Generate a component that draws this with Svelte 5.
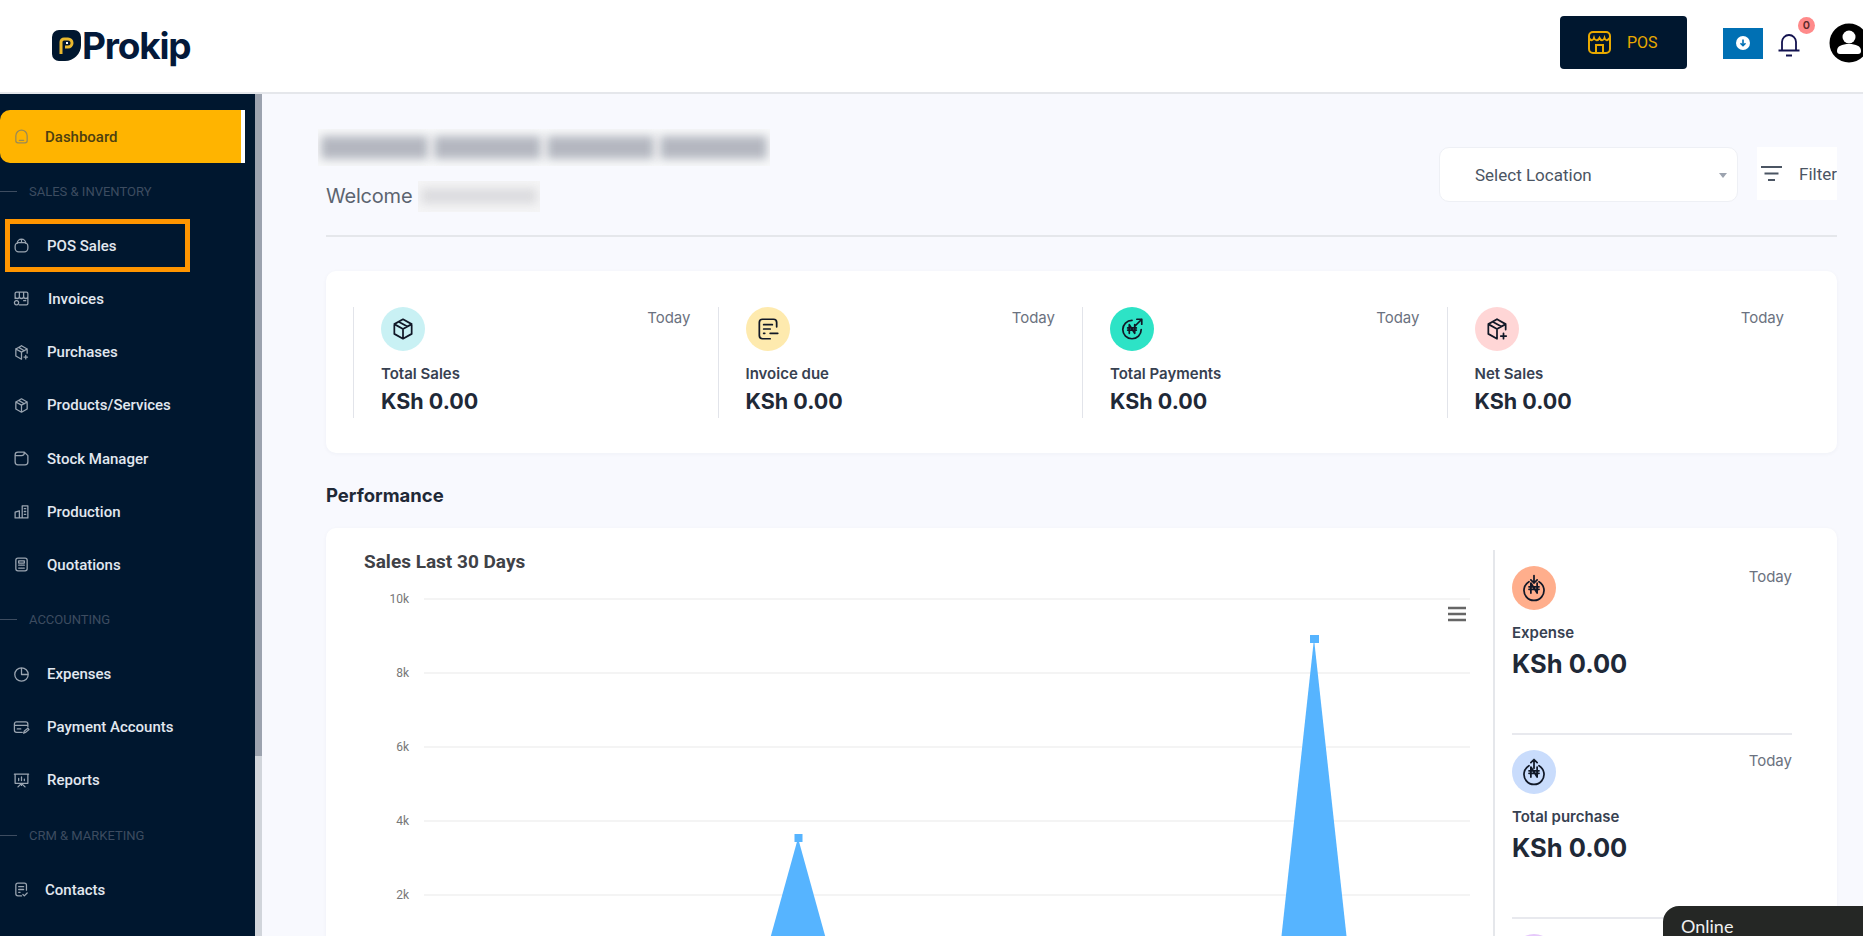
<script lang="ts">
  const nav = [
    { label: 'Dashboard', active: true, dx: -2, d: 'M4 11a8 8 0 0 1 16 0v7a3 3 0 0 1-3 3H7a3 3 0 0 1-3-3zM9 17.500h6' },
    { section: 'SALES & INVENTORY' },
    { label: 'POS Sales', dx: 0, d: 'M3 13a5 5 0 0 1 5-5h8a5 5 0 0 1 5 5v3a5 5 0 0 1-5 5H8a5 5 0 0 1-5-5zM6 9a6 6 0 0 1 12 0M12 3v4' },
    { label: 'Invoices', dx: 1, d: 'M5 3h14a2 2 0 0 1 2 2v14a2 2 0 0 1-2 2H9M3 12V5a2 2 0 0 1 2-2M3 9a3 3 0 0 0 6 0 3 3 0 0 0 6 0 3 3 0 0 0 6 0M9 3v6M15 3v6M15 15h3M5 15a3 3 0 1 0 .01 0' },
    { label: 'Purchases', dx: 0, d: 'M12 2.500l8 4.500v6M4 7l8-4.500M4 7v10l8 4.500M4 7l8 4.500 8-4.500M12 11.500v10M8 4.800l8 4.700M18 16v5M15.500 18.500h5' },
    { label: 'Products/Services', dx: 0, d: 'M12 2.500l8 4.500v10l-8 4.500-8-4.500V7zM4 7l8 4.500L20 7M12 11.500v10M8 4.800l8 4.700' },
    { label: 'Stock Manager', dx: 0, d: 'M3 7a4 4 0 0 1 4-4h9l5 5v9a4 4 0 0 1-4 4H7a4 4 0 0 1-4-4zM3 8h9a4 4 0 0 0 4-4V3' },
    { label: 'Production', dx: 0, d: 'M3 21V13l6-2v10M3 21h18V4l-8 0v17M16 8h2M16 12h2M16 16h2' },
    { label: 'Quotations', dx: 0, d: 'M7 3h10a3 3 0 0 1 3 3v12a3 3 0 0 1-3 3H7a3 3 0 0 1-3-3V6a3 3 0 0 1 3-3zM8 7h8v3H8zM8 13h2M11 13h2M14 13h2M8 17h2M11 17h2M14 17h2' },
    { section: 'ACCOUNTING' },
    { label: 'Expenses', dx: 0, d: 'M12 2.500a9.500 9.500 0 1 0 9.500 9.500A9.500 9.500 0 0 0 12 2.500zM12 3v9h9' },
    { label: 'Payment Accounts', dx: 0, d: 'M21 11V7a3 3 0 0 0-3-3H5a3 3 0 0 0-3 3v9a3 3 0 0 0 3 3h8M2 9h19M6 14h5M15 20l1-3 5-4 1.500 2-5 4z' },
    { label: 'Reports', dx: 0, d: 'M3 3h18v13H3zM7 21l5-5 5 5M12 16v3M8 12V9M12 12V7M16 12v-2M2 3h20' },
    { section: 'CRM & MARKETING' },
    { label: 'Contacts', dx: -2, d: 'M19 13V6a3 3 0 0 0-3-3H7a3 3 0 0 0-3 3v12a3 3 0 0 0 3 3h5M8 8h7M8 12h7M8 16h2M14 19l2 2 4-4' }
  ]

  const naira = 'M9.500 16V8l5 8V8M8 11h8M8 13h8'
  const stats = [
    { label: 'Total Sales', tint: '#c9f1f4', d: 'M12 3l8 4.500v9L12 21l-8-4.500v-9zM4 7.500L12 12l8-4.500M12 12v9M8 5.200l8 4.600' },
    { label: 'Invoice due', tint: '#feeaae', d: 'M20 10V6a3 3 0 0 0-3-3H7a3 3 0 0 0-3 3v12a3 3 0 0 0 3 3h7M8 8h8M8 12h6M8 16h1M14 16h7' },
    { label: 'Total Payments', tint: '#2de3c6', d: `M12 4a8.500 8.500 0 1 0 8.500 8.500M15 9l6-6M16.500 3H21v4.500${naira}` },
    { label: 'Net Sales', tint: '#ffd6d6', d: 'M12 3l8 4.500v5M4 7.500L12 3M4 7.500v9L12 21M4 7.500L12 12l8-4.500M12 12v9M8 5.200l8 4.600M18 16v5M15.500 18.500h5' }
  ]
  const sideStats = [
    { label: 'Total purchase', tint: '#c9dcfc', d: `M8 7a8 8 0 1 0 8 0M12 9V2M9.500 4.500L12 2l2.500 2.500${naira}` }
  ]
  const expenseIcon = `M8 7a8 8 0 1 0 8 0M12 8V2M9.500 5.500L12 8l2.500-2.500${naira}`
  const ticks = ['10k', '8k', '6k', '4k', '2k']
</script>

<div class="page">
  <header class="topbar">
    <div class="logo">
      <svg width="29" height="31" viewBox="0 0 29 31">
        <path d="M7 0h15a7 7 0 0 1 7 7v8a16 16 0 0 1-16 16H7a7 7 0 0 1-7-7V7a7 7 0 0 1 7-7z" fill="#00172f" />
        <path d="M9 24V12a3 3 0 0 1 3-3h4a4 4 0 0 1 0 8h-3" fill="none" stroke="#e9b92f" stroke-width="3" />
        <path d="M14 13h2" stroke="#fff" stroke-width="2" />
      </svg>
      <span>Prokip</span>
    </div>
    <div class="top-actions">
      <button class="pos-btn">
        <svg width="23" height="23" viewBox="0 0 23 23" fill="none" stroke="#e8a900" stroke-width="2">
          <rect x="1" y="1" width="21" height="21" rx="4" />
          <path d="M1 7c2 3 4 3 5 0 1 3 4 3 5.500 0 1.500 3 4 3 5 0 1 3 3 3 5 0M8 22v-8h7v8" />
        </svg>
        POS
      </button>
      <button class="install">
        <svg width="14" height="14" viewBox="0 0 14 14">
          <circle cx="7" cy="7" r="7" fill="#fff" />
          <path d="M7 3.500v6M4.500 7.200L7 9.700l2.500-2.500" fill="none" stroke="#0070b4" stroke-width="1.600" />
        </svg>
      </button>
      <div class="bell">
        <svg width="24" height="25" viewBox="0 0 24 25" fill="none" stroke="#12124f" stroke-width="1.800">
          <path d="M5 18V10a7 7 0 0 1 14 0v8M1.500 18.500h21M9 23.500h6" />
        </svg>
        <span class="badge">0</span>
      </div>
      <svg class="avatar" width="40" height="40" viewBox="0 0 40 40">
        <circle cx="20" cy="20" r="19.500" fill="#000" />
        <circle cx="20" cy="14" r="6.500" fill="#fff" />
        <path d="M8 28c0-5 5-7 12-7s12 2 12 7c0 2-1 3-3 3H11c-2 0-3-1-3-3z" fill="#fff" />
      </svg>
    </div>
  </header>

  <div class="body">
    <aside class="sidebar">
      <nav class="menu">
        {#each nav as item}
          {#if item.section}
            <div class="section"><i></i>{item.section}</div>
          {:else}
            <a class="item" class:active={item.active} class:marked={item.label === 'POS Sales'} href="#top">
              <svg width="17" height="17" viewBox="0 0 24 24" fill="none" stroke="currentColor" stroke-width="1.800" stroke-linecap="round" stroke-linejoin="round">
                <path d={item.d} />
              </svg>
              <span style="margin-left: {item.dx}px">{item.label}</span>
            </a>
          {/if}
        {/each}
      </nav>
      <div class="scroll"><div class="thumb"></div></div>
    </aside>

    <main class="content">
      <div class="head">
        <div>
          <div class="smudge title"><b></b><b></b><b></b><b></b></div>
          <div class="welcome">Welcome .<div class="smudge name"><b></b></div></div>
        </div>
        <div class="filters">
          <div class="select">Select Location<i></i></div>
          <button class="filter">
            <svg width="21" height="17" viewBox="0 0 21 17" stroke="#4b5563" stroke-width="2.200">
              <path d="M0 2h21M3.500 8.500h14M7 15h7" />
            </svg>
            Filter
          </button>
        </div>
      </div>

      <section class="card summary">
        {#each stats as s}
          <div class="stat">
            <div class="stat-top">
              <span class="dot" style="background: {s.tint}">
                <svg width="26" height="26" viewBox="0 0 24 24" fill="none" stroke="#111827" stroke-width="1.600" stroke-linecap="round" stroke-linejoin="round"><path d={s.d} /></svg>
              </span>
              <span class="when">Today</span>
            </div>
            <div class="stat-label">{s.label}</div>
            <div class="stat-value">KSh 0.00</div>
          </div>
        {/each}
      </section>

      <h2>Performance</h2>

      <section class="card perf">
        <div class="chart">
          <h3>Sales Last 30 Days</h3>
          <svg class="plot" width="1100" height="380" viewBox="0 0 1100 380">
            {#each ticks as t, i}
              <line x1="60" x2="1106" y1={10 + i * 74} y2={10 + i * 74} stroke="#f1f1f1" stroke-width="1.500" />
              <text x="45" y={14 + i * 74} text-anchor="end">{t}</text>
            {/each}
            <path d="M398 379L434 249L470 379z" fill="#56b4ff" />
            <rect x="430.500" y="245" width="8" height="8" fill="#56b4ff" />
            <path d="M914 379L950 50L986 379z" fill="#56b4ff" />
            <rect x="946" y="46" width="9" height="8" fill="#56b4ff" />
            <path d="M1084 19h18M1084 25h18M1084 31h18" stroke="#666" stroke-width="2.500" />
          </svg>
        </div>
        <div class="side">
          <div class="side-stat">
            <div class="stat-top">
              <span class="dot" style="background: #ffae8c">
                <svg width="30" height="30" viewBox="0 0 24 24" fill="none" stroke="#111827" stroke-width="1.400" stroke-linecap="round" stroke-linejoin="round"><path d={expenseIcon} /></svg>
              </span>
              <span class="when">Today</span>
            </div>
            <div class="stat-label">Expense</div>
            <div class="stat-value big">KSh 0.00</div>
          </div>
          {#each sideStats as s}
            <div class="side-stat">
              <div class="stat-top">
                <span class="dot" style="background: {s.tint}">
                  <svg width="30" height="30" viewBox="0 0 24 24" fill="none" stroke="#111827" stroke-width="1.400" stroke-linecap="round" stroke-linejoin="round"><path d={s.d} /></svg>
                </span>
                <span class="when">Today</span>
              </div>
              <div class="stat-label">{s.label}</div>
              <div class="stat-value big">KSh 0.00</div>
            </div>
          {/each}
          <div class="side-stat"><span class="dot" style="background: #e6c9fb"></span></div>
        </div>
      </section>
    </main>
  </div>

  <div class="online">Online</div>
</div>

<style>
  :global(body) {
    margin: 0;
    overflow: hidden;
  }

  .page {
    position: relative;
    width: 1863px;
    height: 936px;
    overflow: hidden;
    font-family: Inter, 'Liberation Sans', sans-serif;
    background: #f8f9fe;
  }

  button {
    border: none;
    padding: 0;
    font: inherit;
  }

  .topbar {
    height: 92px;
    box-sizing: content-box;
    background: #fff;
    border-bottom: 2px solid #e5e7eb;
    display: flex;
    align-items: center;
    justify-content: space-between;
  }

  .logo {
    display: flex;
    align-items: center;
    gap: 1px;
    margin-left: 52px;
    margin-top: -2px;
    font-size: 37px;
    font-weight: 700;
    letter-spacing: -1.200px;
    color: #03193a;
  }

  .top-actions {
    display: flex;
    align-items: center;
    margin-right: -6px;
  }

  .pos-btn {
    width: 127px;
    height: 53px;
    margin-top: -8px;
    background: #00172f;
    border-radius: 4px;
    color: #e8a900;
    font-family: Roboto, sans-serif;
    font-size: 16px;
    display: flex;
    align-items: center;
    gap: 16px;
    padding-left: 28px;
    box-sizing: border-box;
  }

  .install {
    width: 40px;
    height: 31px;
    margin: 0 0 6px 36px;
    background: #0070b4;
    display: flex;
    align-items: center;
    justify-content: center;
  }

  .bell {
    position: relative;
    margin: 0 28px 0 14px;
    height: 25px;
    top: -2px;
  }

  .badge {
    position: absolute;
    top: -15px;
    left: 21px;
    width: 17px;
    height: 17px;
    border-radius: 50%;
    background: #ff8a8a;
    color: #5b2b2b;
    font-size: 11px;
    font-weight: 600;
    text-align: center;
    line-height: 17px;
  }

  .avatar {
    margin-right: 0;
    flex: none;
    margin-top: -6px;
  }

  .body {
    display: flex;
    height: 842px;
  }

  .sidebar {
    flex: none;
    width: 262px;
    background: #00172f;
    display: flex;
    font-family: Roboto, sans-serif;
  }

  .menu {
    width: 255px;
    padding-top: 16px;
  }

  .scroll {
    width: 7px;
    background: #d1d5db;
  }

  .thumb {
    height: 662px;
    background: #9ca3af;
  }

  .item {
    display: flex;
    align-items: center;
    gap: 17px;
    height: 53.200px;
    padding-left: 13px;
    color: #e2e8f0;
    font-size: 15px;
    font-weight: 500;
    text-decoration: none;
    box-sizing: border-box;
  }

  .item svg {
    color: #9aa5b1;
  }

  .item.active {
    width: 245px;
    background: #ffb400;
    color: #4e3f10;
    border-right: 4px solid #fff;
    border-radius: 10px 0 0 10px;
    margin-bottom: 0;
  }

  .item.active svg {
    color: #9a8a55;
  }

  .item.marked {
    width: 185px;
    margin-left: 5px;
    padding-left: 8px;
    border: 5px solid #ff9500;
    outline: none;
    padding-left: 3px;
  }

  .section {
    display: flex;
    align-items: center;
    gap: 12px;
    height: 56px;
    color: #3d4c60;
    font-size: 13px;
  }

  .section i {
    width: 17px;
    height: 1px;
    background: #3d4c60;
  }

  .content {
    flex: 1;
    padding: 35px 26px 0 64px;
    min-width: 0;
  }

  .head {
    display: flex;
    justify-content: space-between;
    padding-bottom: 23px;
    border-bottom: 2px solid #e5e7eb;
  }

  .smudge {
    background: #f8f9fa;
    overflow: hidden;
    display: flex;
  }

  .smudge b {
    display: block;
    height: 60%;
    margin: auto 3px;
    flex: 1;
    background: #b4b7c0;
    filter: blur(5px);
  }

  .smudge.title {
    width: 452px;
    height: 37px;
    margin-left: -8px;
  }

  .welcome {
    display: flex;
    align-items: center;
    height: 32px;
    margin-top: 14px;
    font-size: 20px;
    color: #5c6470;
    white-space: nowrap;
    letter-spacing: -0.200px;
  }

  .smudge.name {
    width: 122px;
    height: 31px;
    margin-left: -5px;
    background: #f5f5f6;
  }

  .smudge.name b {
    background: #dcdcdf;
    height: 50%;
  }

  .filters {
    display: flex;
    gap: 19px;
    margin-top: 18px;
    height: 55px;
  }

  .select {
    position: relative;
    width: 299px;
    box-sizing: border-box;
    background: #fff;
    border: 1px solid #eef0f5;
    border-radius: 10px;
    padding-left: 35px;
    display: flex;
    align-items: center;
    font-family: Roboto, sans-serif;
    font-size: 17px;
    color: #4b5563;
  }

  .select i {
    position: absolute;
    right: 10px;
    top: 25px;
    border: 4px solid transparent;
    border-top: 5px solid #9ca3af;
    border-bottom: 0;
  }

  .filter {
    width: 80px;
    height: 53px;
    background: #fff;
    color: #4b5563;
    font-family: Roboto, sans-serif;
    font-size: 17px;
    display: flex;
    align-items: center;
    gap: 17px;
    padding-left: 4px;
    box-sizing: border-box;
    overflow: hidden;
  }

  .card {
    background: #fff;
    border-radius: 10px;
    box-shadow: 0 1px 4px rgba(30, 40, 80, 0.04);
  }

  .summary {
    margin-top: 34px;
    height: 182px;
    box-sizing: border-box;
    padding: 36px 0 0 27px;
    display: grid;
    grid-template-columns: repeat(4, 364.500px);
  }

  .stat {
    height: 111px;
    border-left: 1.500px solid #e2e4ea;
    padding: 0 27px;
    box-sizing: border-box;
  }

  .stat-top {
    display: flex;
    justify-content: space-between;
    align-items: flex-start;
  }

  .dot {
    width: 44px;
    height: 44px;
    border-radius: 50%;
    display: flex;
    align-items: center;
    justify-content: center;
  }

  .when {
    margin-top: 1px;
    font-size: 15px;
    color: #6b7280;
  }

  .stat-label {
    margin-top: 13px;
    font-size: 15px;
    font-weight: 600;
    color: #374151;
    line-height: 20px;
  }

  .stat-value {
    margin-top: 3px;
    font-size: 21.500px;
    font-weight: 700;
    color: #1f2937;
    line-height: 29px;
  }

  .stat-value.big {
    font-size: 25.500px;
    line-height: 33px;
    margin-top: 4px;
  }

  h2 {
    margin: 30px 0 20px;
    font-size: 18.500px;
    font-weight: 700;
    line-height: 25px;
    color: #1f2937;
  }

  .perf {
    height: 420px;
    display: flex;
    padding-top: 22px;
    box-sizing: border-box;
  }

  .chart {
    width: 1167px;
    flex: none;
    padding-left: 38px;
    box-sizing: border-box;
  }

  h3 {
    margin: 0;
    font-family: Roboto, sans-serif;
    font-size: 19px;
    font-weight: 700;
    line-height: 24px;
    color: #3f4247;
  }

  .plot {
    display: block;
    margin-top: 15px;
    overflow: visible;
  }

  .plot text {
    font-family: Roboto, 'Liberation Sans', sans-serif;
    font-size: 12px;
    fill: #777;
  }

  .side {
    flex: 1;
    border-left: 2px solid #e5e7eb;
    padding: 16px 45px 0 17px;
  }

  .side-stat {
    height: 167px;
    border-bottom: 2px solid #e8e9ee;
    margin-bottom: 15px;
  }

  .side-stat:last-child {
    border-bottom: none;
  }

  .online {
    position: absolute;
    left: 1663px;
    top: 906px;
    width: 200px;
    height: 30px;
    padding: 9px 0 0 18px;
    background: #252725;
    border-radius: 16px 0 0 0;
    color: #f0f0f0;
    font-family: Lato, sans-serif;
    font-size: 18px;
    line-height: 22px;
    box-sizing: border-box;
  }
</style>
